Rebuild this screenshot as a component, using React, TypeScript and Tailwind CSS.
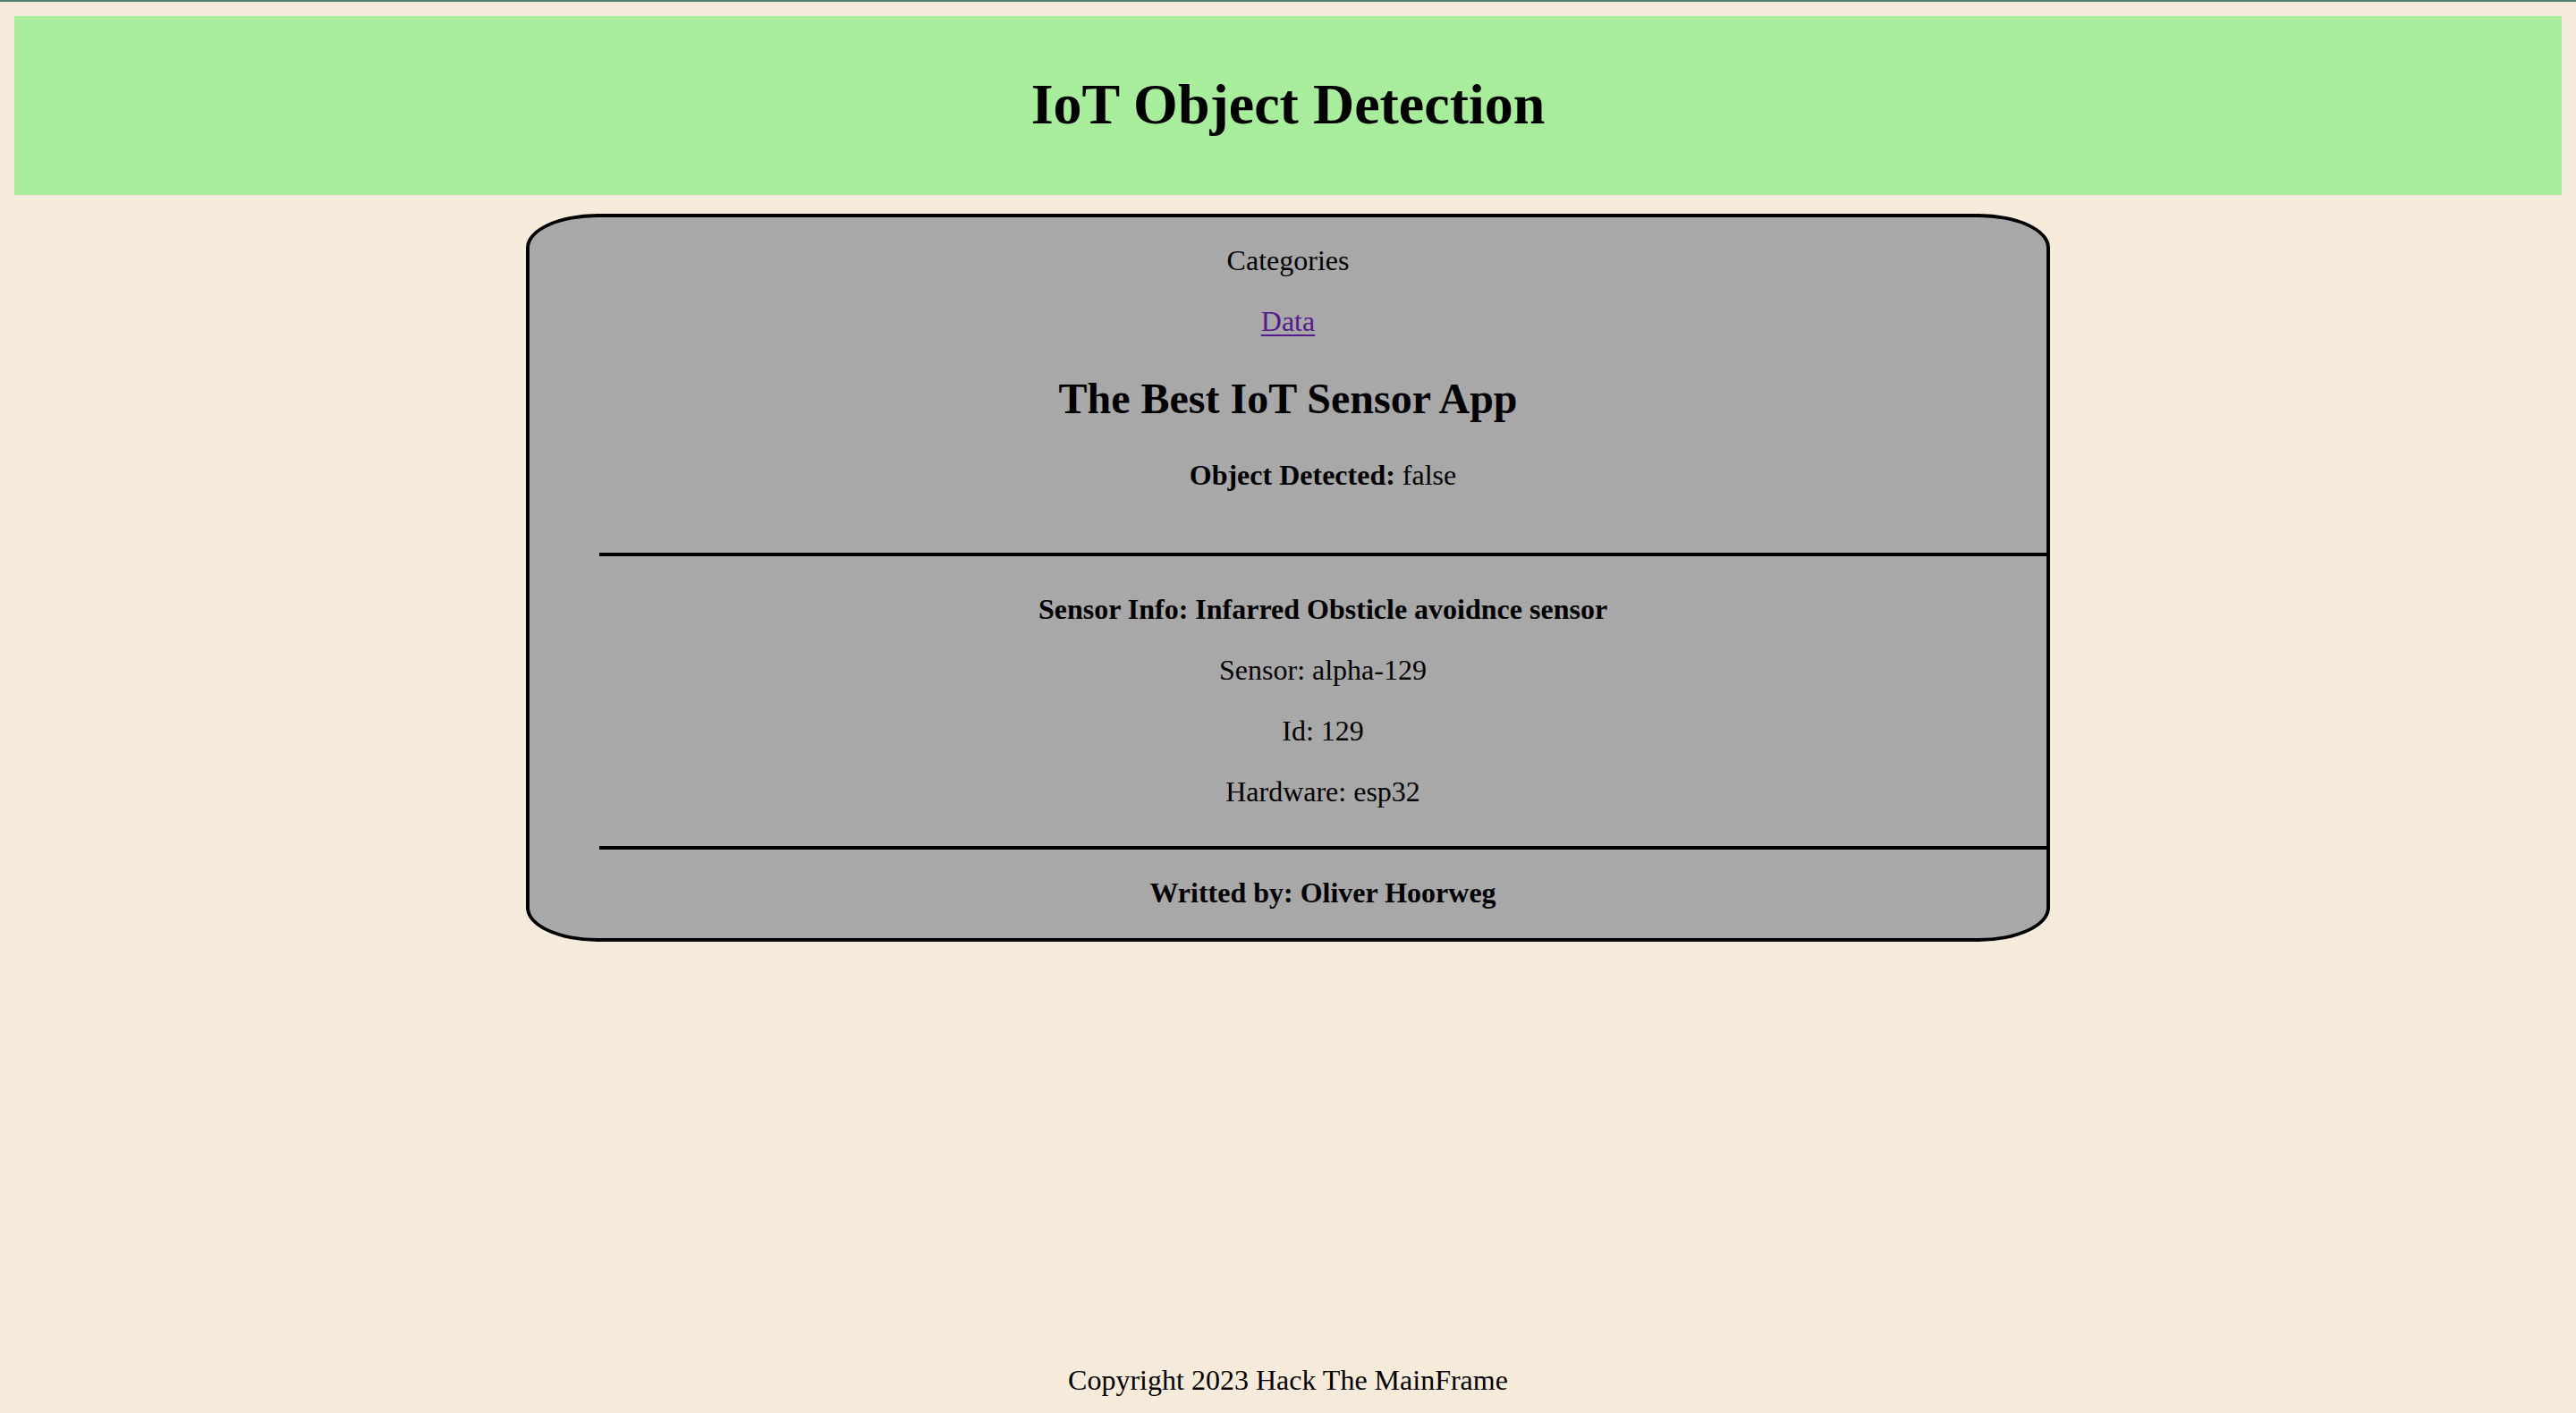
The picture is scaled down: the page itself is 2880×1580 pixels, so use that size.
import React from 'react';

const sensor = {
  info: 'Infarred Obsticle avoidnce sensor',
  name: 'alpha-129',
  id: 129,
  hardware: 'esp32',
};

export default function App() {
  return (
    <div className="min-h-screen flex flex-col bg-[#f6ebdb] text-black font-['Liberation_Serif','Times_New_Roman',serif] text-[32px] leading-[36px]">
      <div className="h-[2px] bg-[#4f8272]" />

      <header className="mx-[16px] mt-[16px] h-[200px] bg-[#a8ed9b] pt-[63px]">
        <h1 className="text-center text-[64px] leading-[72px] font-bold">IoT Object Detection</h1>
      </header>

      <main className="mt-[21px] mx-auto w-[1704px] bg-[#a8a8a8] border-4 border-black rounded-[80px_/_38px] pt-[30px] pb-[33px]">
        <p className="text-center">Categories</p>
        <p className="text-center mt-[32px]">
          <a href="#" className="text-[#551a8b] underline decoration-2 underline-offset-[4px]">Data</a>
        </p>
        <h2 className="text-center mt-[41px] text-[48px] leading-[56px] font-bold">The Best IoT Sensor App</h2>

        <div className="pl-[78px]">
          <p className="text-center mt-[39px]">
            <b>Object Detected:</b> false
          </p>
          <hr className="mt-[69px] border-t-4 border-black" />
          <p className="text-center mt-[41px] font-bold">Sensor Info: {sensor.info}</p>
          <p className="text-center mt-[32px]">Sensor: {sensor.name}</p>
          <p className="text-center mt-[32px]">Id: {sensor.id}</p>
          <p className="text-center mt-[32px]">Hardware: {sensor.hardware}</p>
          <hr className="mt-[43px] border-t-4 border-black" />
          <p className="text-center mt-[30px] font-bold">Writted by: Oliver Hoorweg</p>
        </div>
      </main>

      <footer className="mt-auto pb-[19px] text-center">Copyright 2023 Hack The MainFrame</footer>
    </div>
  );
}
